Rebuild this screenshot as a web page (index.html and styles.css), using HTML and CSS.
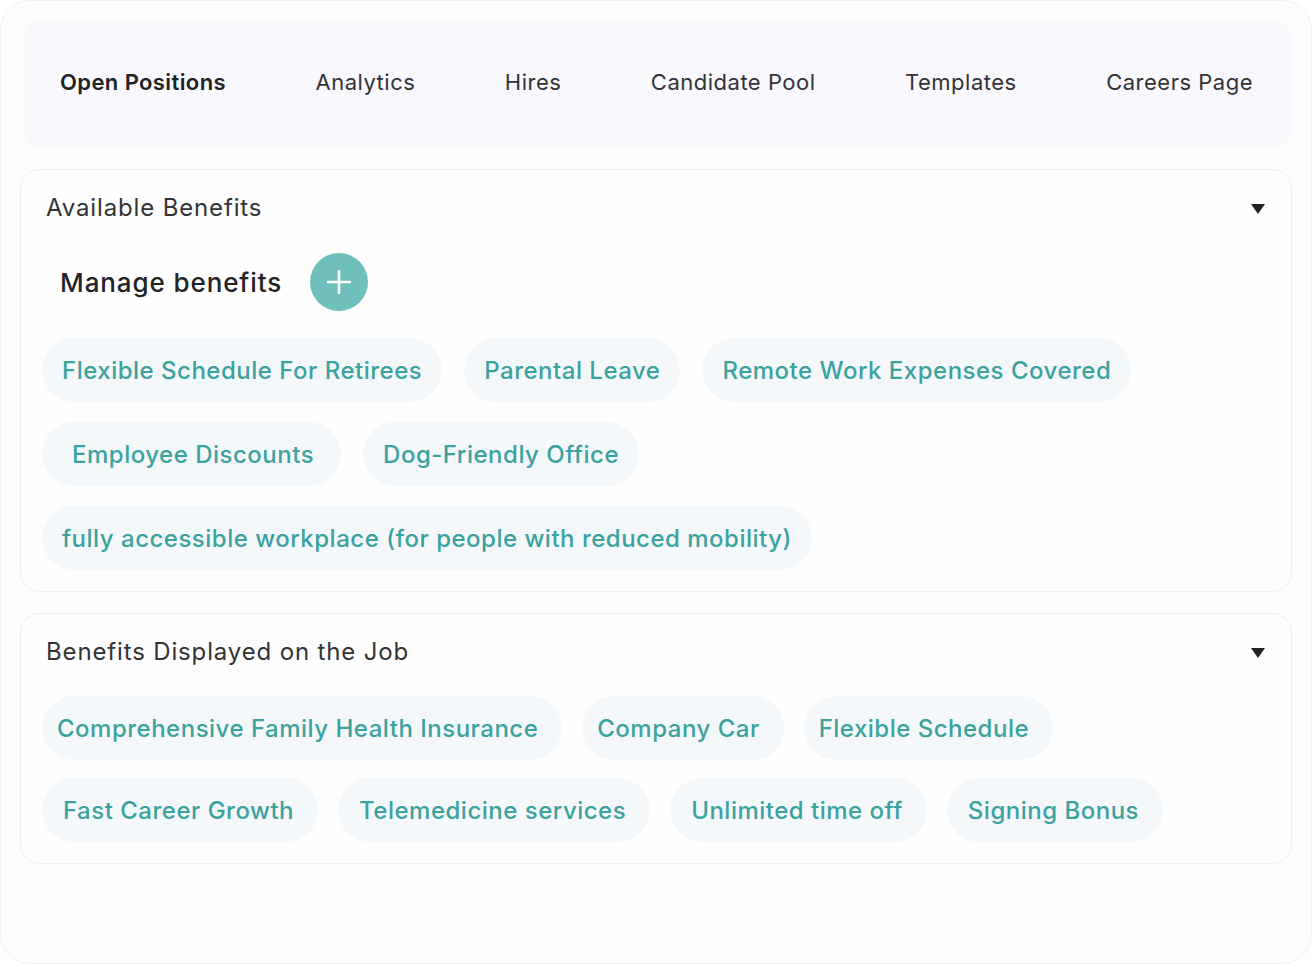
FILE: index.html
```html
<!DOCTYPE html>
<html lang="en">
<head>
<meta charset="utf-8">
<title>Benefits</title>
<link rel="stylesheet" href="styles.css">
</head>
<body>
<div class="card">
  <nav class="tabs">
    <a class="tab active">Open Positions</a>
    <a class="tab">Analytics</a>
    <a class="tab">Hires</a>
    <a class="tab">Candidate Pool</a>
    <a class="tab">Templates</a>
    <a class="tab">Careers Page</a>
  </nav>

  <section class="panel">
    <header class="panel-head">
      <h2 class="panel-title">Available Benefits</h2>
      <span class="caret"></span>
    </header>
    <div class="manage">
      <span class="manage-label">Manage benefits</span>
      <button class="add-btn" type="button" aria-label="Add benefit">
        <svg width="24" height="24" viewBox="0 0 24 24"><path d="M12 1v22M1 12h22" stroke="#fff" stroke-width="2.6" stroke-linecap="round"/></svg>
      </button>
    </div>
    <ul class="chips">
      <li class="chip">Flexible Schedule For Retirees</li>
      <li class="chip">Parental Leave</li>
      <li class="chip">Remote Work Expenses Covered</li>
      <li class="chip chip--roomy">Employee Discounts</li>
      <li class="chip">Dog-Friendly Office</li>
      <li class="chip">fully accessible workplace (for people with reduced mobility)</li>
    </ul>
  </section>

  <section class="panel">
    <header class="panel-head">
      <h2 class="panel-title">Benefits Displayed on the Job</h2>
      <span class="caret"></span>
    </header>
    <ul class="chips chips-job">
      <li class="chip chip--snug">Comprehensive Family Health Insurance</li>
      <li class="chip chip--snug">Company Car</li>
      <li class="chip chip--snug">Flexible Schedule</li>
      <li class="chip">Fast Career Growth</li>
      <li class="chip">Telemedicine services</li>
      <li class="chip">Unlimited time off</li>
      <li class="chip">Signing Bonus</li>
    </ul>
  </section>
</div>
</body>
</html>
```

FILE: styles.css
```css
* { box-sizing: border-box; }

html, body {
  margin: 0;
  background: #ffffff;
}

body {
  font-family: "Inter", "Open Sans", sans-serif;
  color: #2b2b2e;
}

.card {
  width: 1312px;
  height: 964px;
  padding: 21px 19px;
  background: #fdfdfe;
  border: 1px solid #f1f1f6;
  border-radius: 30px;
}

/* top navigation */
.tabs {
  display: flex;
  justify-content: space-between;
  align-items: center;
  height: 124px;
  margin: 0 1px 0 3px;
  padding: 0 38px 4px 37px;
  background: #f8f8fd;
  border-radius: 14px;
}

.tab {
  font-size: 22px;
  color: #333336;
  letter-spacing: 0.5px;
  cursor: pointer;
}

.tab.active {
  font-weight: 600;
  color: #222225;
  letter-spacing: 0.4px;
}

/* collapsible panels */
.panel {
  margin-top: 23px;
  padding: 23px 26px 21px 21px;
  background: #fefefe;
  border: 1px solid #eeeff5;
  border-radius: 20px;
}

.panel + .panel {
  margin-top: 21px;
}

.panel-head {
  display: flex;
  align-items: center;
  justify-content: space-between;
  height: 28px;
  padding-left: 4px;
}

.panel-title {
  margin: 0;
  font-size: 24px;
  font-weight: 400;
  color: #333336;
  letter-spacing: 0.85px;
}

.caret {
  width: 0;
  height: 0;
  margin-top: 4px;
  border-left: 7px solid transparent;
  border-right: 7px solid transparent;
  border-top: 10px solid #222;
}

.manage {
  display: flex;
  align-items: center;
  gap: 28px;
  height: 58px;
  margin-top: 32px;
  padding-left: 18px;
}

.manage-label {
  font-size: 26px;
  font-weight: 500;
  color: #232326;
  letter-spacing: 0.9px;
}

.add-btn {
  display: flex;
  align-items: center;
  justify-content: center;
  width: 58px;
  height: 58px;
  padding: 0;
  border: 0;
  border-radius: 50%;
  background: #6fbfba;
}

/* benefit pills */
.chips {
  display: flex;
  flex-wrap: wrap;
  gap: 20px 22px;
  margin: 27px 0 0;
  padding: 0;
  list-style: none;
}

.chip {
  display: flex;
  align-items: center;
  height: 64px;
  padding: 0 20px;
  border-radius: 32px;
  background: #f5f8fb;
  font-size: 24px;
  font-weight: 500;
  color: #3aa29f;
  letter-spacing: 0.5px;
}

.chip--roomy {
  padding: 0 27px 0 30px;
}

.chips-job {
  margin-top: 31px;
  gap: 18px 20px;
}

.chips-job .chip {
  padding: 0 24px 0 21px;
}

.chips-job .chip--snug {
  padding: 0 24px 0 15px;
}
```
